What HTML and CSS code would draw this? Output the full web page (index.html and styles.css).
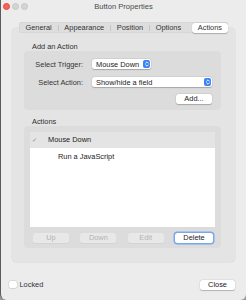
FILE: index.html
```html
<!DOCTYPE html>
<html lang="en">

<head>
    <meta charset="UTF-8">
    <meta name="viewport" content="width=device-width, initial-scale=1.0">
    <title>Button Properties</title>
    <link rel="stylesheet" href="styles.css">
</head>

<body>
    <div class="window">
        <header class="titlebar">
            <div class="lights">
                <span class="light red"></span>
                <span class="light"></span>
                <span class="light"></span>
            </div>
            <div class="title">Button Properties</div>
            <div></div>
        </header>

        <nav class="tabs">
            <span class="tab">General</span>
            <i class="sep"></i>
            <span class="tab">Appearance</span>
            <i class="sep"></i>
            <span class="tab">Position</span>
            <i class="sep"></i>
            <span class="tab">Options</span>
            <span class="tab active">Actions</span>
        </nav>

        <section class="panel">
            <h4 class="group-label">Add an Action</h4>
            <div class="group add-group">
                <div class="field-row">
                    <label>Select Trigger:</label>
                    <div class="popup trigger">
                        <span>Mouse Down</span>
                        <span class="stepper">
                            <svg viewBox="0 0 6 8" width="6" height="8">
                                <path d="M1.6 3.2 L3 1.8 L4.4 3.2 M1.6 4.8 L3 6.2 L4.4 4.8" fill="none" stroke="#fff" stroke-width="0.9" stroke-linecap="round" stroke-linejoin="round" />
                            </svg>
                        </span>
                    </div>
                </div>
                <div class="field-row">
                    <label>Select Action:</label>
                    <div class="popup action">
                        <span>Show/hide a field</span>
                        <span class="stepper">
                            <svg viewBox="0 0 6 8" width="6" height="8">
                                <path d="M1.6 3.2 L3 1.8 L4.4 3.2 M1.6 4.8 L3 6.2 L4.4 4.8" fill="none" stroke="#fff" stroke-width="0.9" stroke-linecap="round" stroke-linejoin="round" />
                            </svg>
                        </span>
                    </div>
                </div>
                <div class="add-row">
                    <button class="btn add">Add...</button>
                </div>
            </div>

            <h4 class="group-label">Actions</h4>
            <div class="group list-group">
                <ul class="action-list">
                    <li class="list-head"><span class="check">✓</span>Mouse Down</li>
                    <li class="list-item">Run a JavaScript</li>
                </ul>
                <div class="list-buttons">
                    <button class="btn off">Up</button>
                    <button class="btn off">Down</button>
                    <button class="btn off">Edit</button>
                    <button class="btn focus">Delete</button>
                </div>
            </div>
        </section>

        <footer class="footer">
            <label class="locked"><span class="checkbox"></span>Locked</label>
            <button class="btn close">Close</button>
        </footer>
    </div>
</body>

</html>
```

FILE: styles.css
```css
* {
    margin: 0;
    padding: 0;
    box-sizing: border-box;
}

body {
    font-family: "Liberation Sans", Arial, sans-serif;
    font-size: 7.4px;
    color: #2a2a2a;
    background: #9a9a9a;
}

.window {
    width: 246px;
    height: 300px;
    background: #ececec;
    border-left: 1px solid #5c5c5c;
    border-radius: 0 0 6px 6px;
    display: flex;
    flex-direction: column;
}

/* title bar */
.titlebar {
    height: 13px;
    display: grid;
    grid-template-columns: 1fr auto 1fr;
    align-items: center;
}

.lights {
    display: flex;
    gap: 2px;
    padding-left: 1.5px;
}

.light {
    width: 7px;
    height: 7px;
    border-radius: 50%;
    background: #d4d4d4;
    border: 0.5px solid #c6c6c6;
}

.light.red {
    background: #fe5f57;
    border-color: #e5463f;
}

.title {
    font-size: 7.6px;
    color: #4a4a4a;
}

/* tabs */
.tabs {
    align-self: center;
    margin-top: 9px;
    height: 11px;
    display: flex;
    align-items: center;
    background: #dedede;
    border-radius: 3px;
    box-shadow: inset 0 0 0 0.5px #d0d0d0;
    position: relative;
    z-index: 1;
    padding-left: 0.5px;
}

.tab {
    padding: 0 5.8px;
    line-height: 11px;
    color: #333;
}

.tab.active {
    background: #fff;
    border-radius: 3px;
    box-shadow: 0 0.5px 1px rgba(0, 0, 0, 0.25);
    height: 10px;
    line-height: 10px;
    margin-left: 5px;
}

.sep {
    width: 1px;
    height: 6px;
    background: #c4c4c4;
}

/* panel */
.panel {
    margin: -5px 11px 0 11px;
    padding: 14px 14px 14px 12px;
    background: #e4e4e4;
    border-radius: 4px;
    box-shadow: 0 0 0 0.5px #dadada;
}

.group-label {
    font-weight: normal;
    line-height: 9px;
    margin-left: 8px;
    color: #2e2e2e;
}

.group {
    background: #dcdcdc;
    border-radius: 4px;
}

.add-group {
    padding: 8px 9px 6px 0;
    margin-bottom: 7px;
    display: flex;
    flex-direction: column;
    gap: 8px;
}

.field-row {
    display: grid;
    grid-template-columns: 59px auto;
    column-gap: 9px;
    align-items: center;
}

.field-row label {
    text-align: right;
    color: #333;
}

.popup {
    height: 10px;
    background: #fff;
    border-radius: 2.5px;
    box-shadow: 0 0.5px 1px rgba(0, 0, 0, 0.22), 0 0 0 0.5px rgba(0, 0, 0, 0.06);
    display: flex;
    align-items: center;
    justify-content: space-between;
    padding: 0 1px 0 4px;
    color: #222;
}

.popup.trigger {
    width: 59px;
}

.popup.action {
    width: 120px;
}

.stepper {
    width: 7px;
    height: 8px;
    background: #3b82f7;
    border-radius: 2px;
    display: flex;
    align-items: center;
    justify-content: center;
}

.add-row {
    display: flex;
    justify-content: flex-end;
    margin-top: -1px;
}

.btn {
    font-family: inherit;
    font-size: 7.4px;
    color: #222;
    height: 9.5px;
    line-height: 9px;
    border: none;
    border-radius: 2.5px;
    background: #fff;
    box-shadow: 0 0.5px 1px rgba(0, 0, 0, 0.22), 0 0 0 0.5px rgba(0, 0, 0, 0.06);
    text-align: center;
}

.btn.add {
    width: 36px;
}

/* actions list */
.list-group {
    padding: 6px 6px 5px 6px;
}

.action-list {
    list-style: none;
    height: 95px;
    background: #fff;
}

.list-head {
    height: 16px;
    background: #e4e4e4;
    display: flex;
    align-items: center;
    padding-left: 2px;
    color: #222;
}

.check {
    width: 16px;
    font-size: 6px;
    color: #8a8a8a;
}

.list-item {
    height: 18px;
    display: flex;
    align-items: center;
    padding-left: 28px;
    color: #222;
}

.list-buttons {
    margin-top: 6px;
    padding: 0 2px 0 3px;
    display: flex;
    justify-content: space-between;
}

.list-buttons .btn {
    width: 36px;
    height: 10px;
}

.btn.off {
    background: #e8e8e8;
    color: #b3b3b3;
    box-shadow: 0 0.5px 0.5px rgba(0, 0, 0, 0.08);
}

.btn.focus {
    width: 38px;
    box-shadow: 0 0 0 1.5px #7aa6f0, 0 0.5px 1px rgba(0, 0, 0, 0.2);
}

/* footer */
.footer {
    margin-top: 18px;
    padding: 0 11px 0 8px;
    display: flex;
    justify-content: space-between;
    align-items: center;
}

.locked {
    display: flex;
    align-items: center;
    gap: 3px;
    color: #333;
}

.checkbox {
    width: 7.5px;
    height: 7.5px;
    background: #fff;
    border-radius: 2px;
    box-shadow: 0 0 0 0.5px #c8c8c8, 0 0.5px 0.5px rgba(0, 0, 0, 0.1);
}

.btn.close {
    width: 35px;
    height: 10px;
}
```
